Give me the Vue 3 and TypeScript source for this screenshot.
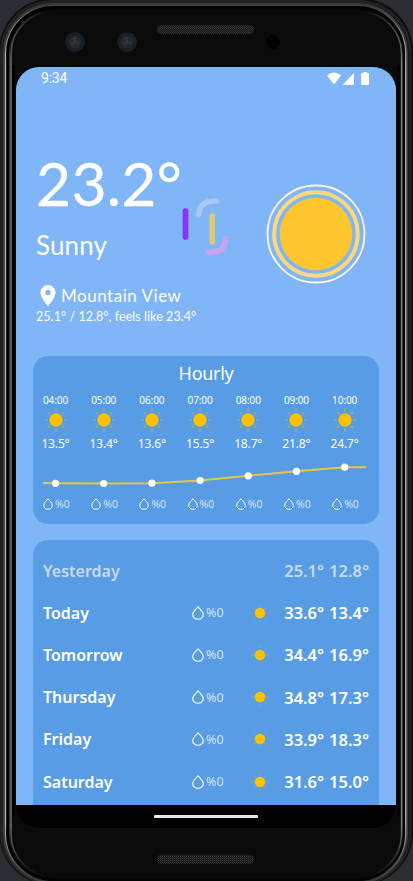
<script setup lang="ts">
interface Hour { time: string; temp: string; y: number }
interface Day { name: string; high: string; low: string; past?: boolean }

const hours: Hour[] = [
  { time: '04:00', temp: '13.5°', y: 20.3 },
  { time: '05:00', temp: '13.4°', y: 20.5 },
  { time: '06:00', temp: '13.6°', y: 20.2 },
  { time: '07:00', temp: '15.5°', y: 17.5 },
  { time: '08:00', temp: '18.7°', y: 12.8 },
  { time: '09:00', temp: '21.8°', y: 8.3 },
  { time: '10:00', temp: '24.7°', y: 4.2 },
]
const days: Day[] = [
  { name: 'Yesterday', high: '25.1°', low: '12.8°', past: true },
  { name: 'Today', high: '33.6°', low: '13.4°' },
  { name: 'Tomorrow', high: '34.4°', low: '16.9°' },
  { name: 'Thursday', high: '34.8°', low: '17.3°' },
  { name: 'Friday', high: '33.9°', low: '18.3°' },
  { name: 'Saturday', high: '31.6°', low: '15.0°' },
]
const pointX = (i: number): number => 12.5 + i * 48.2
const line = `0,20 ${hours.map((h, i) => `${pointX(i)},${h.y}`).join(' ')} 323,4.2`
const rays = [0, 45, 90, 135, 180, 225, 270, 315]
</script>

<template>
  <div class="device">
    <svg class="frame" width="413" height="881" viewBox="0 0 413 881">
      <defs>
        <linearGradient id="metal" x1="0" y1="0" x2="0" y2="1">
          <stop offset="0" stop-color="#444" />
          <stop offset="0.02" stop-color="#777" />
          <stop offset="0.07" stop-color="#bcbcbc" />
          <stop offset="0.93" stop-color="#bcbcbc" />
          <stop offset="1" stop-color="#333" />
        </linearGradient>
        <linearGradient id="inner" x1="0" y1="0" x2="0" y2="1">
          <stop offset="0" stop-color="#0a0a0a" />
          <stop offset="0.008" stop-color="#333" />
          <stop offset="0.06" stop-color="#77787a" />
          <stop offset="0.94" stop-color="#77787a" />
          <stop offset="1" stop-color="#0a0a0a" />
        </linearGradient>
        <pattern id="mesh" width="2" height="2" patternUnits="userSpaceOnUse">
          <rect width="2" height="2" fill="#151515" />
          <rect width="1" height="1" fill="#3a3a3a" />
          <rect x="1" y="1" width="1" height="1" fill="#2c2c2c" />
        </pattern>
      </defs>
      <rect width="413" height="881" fill="#2c2d33" />
      <rect x="-1" y="-2" width="414" height="888" rx="54" fill="#0c0c0c" />
      <rect x="1.5" y="1.5" width="408.500" height="882" rx="51" fill="none" stroke="#222" stroke-width="3" />
      <rect x="4" y="4" width="403" height="878.5" rx="49" fill="#000" stroke="#3b3b3b" stroke-width="2" />
      <rect x="5.500" y="5.300" width="400.200" height="876.500" rx="48" fill="#020202" stroke="url(#metal)" stroke-width="1.200" />
      <rect x="9.500" y="10" width="393" height="868" rx="44" fill="none" stroke="url(#inner)" stroke-width="1" opacity=".4" />
      <rect x="11" y="11" width="390.500" height="866" rx="43" fill="#0a0a0a" stroke="url(#inner)" stroke-width="1.400" />
      <path d="M13.500 65V816M398.500 65V816" stroke="#000" stroke-width="3" />
      <rect x="157" y="25" width="97" height="9" rx="4.500" fill="url(#mesh)" />
      <rect x="157" y="855" width="97" height="9" rx="4.500" fill="url(#mesh)" />
      <g v-for="x in [75, 127]" :key="x">
        <circle :cx="x" cy="42" r="10" fill="#182027" />
        <circle :cx="x" cy="42" r="6.500" fill="#25282c" />
        <circle :cx="x" cy="42" r="3.500" fill="none" stroke="#484a4d" stroke-dasharray="3 4" />
        <circle :cx="x" cy="42" r="2" fill="#34363a" />
      </g>
      <circle cx="273" cy="42" r="7" fill="#010101" />
    </svg>

    <main class="screen">
      <header class="status">
        <span>9:34</span>
        <svg width="44" height="14" viewBox="0 0 44 14" fill="#fff">
          <path d="M1 3.500Q8-2.300 15 3.500L8 12.500Z" />
          <path d="M28 1V13H16.500Z" />
          <path d="M36 1h1.500V0h3.500v1h1.500q.5 0 .5.500v10.500q0 1-1 1h-6q-1 0-1-1V2q0-1 1-1Z" />
        </svg>
      </header>

      <section class="now">
        <div class="summary">
          <div class="degrees">23.2°</div>
          <div class="condition">Sunny</div>
          <div class="place">
            <svg width="16" height="21" viewBox="0 0 16 21"><path d="M8 0A7.500 7.500 0 0 0 .500 7.500C.500 13 8 21 8 21S15.500 13 15.500 7.500A7.500 7.500 0 0 0 8 0Zm0 10.200a2.700 2.700 0 1 1 0-5.400 2.700 2.700 0 0 1 0 5.400Z" fill="#fff" /></svg>
            <span>Mountain View</span>
          </div>
          <div class="feels">25.1° / 12.8°, feels like 23.4°</div>
        </div>
        <svg class="loader" width="50" height="60" viewBox="0 0 50 60" fill="none" stroke-width="5.600" stroke-linecap="round">
          <path d="M4.500 14V40" stroke="#8a31ff" />
          <path d="M31.200 19V45" stroke="#e0c973" />
          <path d="M17.800 17C18 8 25 3.500 35.500 4" stroke="#a8c7f5" />
          <path d="M44.800 42C44 52 37 56 27 55" stroke="#c8a4ed" />
        </svg>
        <svg class="sun" width="100" height="100" viewBox="0 0 100 100">
          <circle cx="50" cy="50" r="48.500" fill="none" stroke="#fff5df" stroke-width="1.800" />
          <circle cx="50" cy="50" r="41.800" fill="none" stroke="#ffd977" stroke-width="4" />
          <circle cx="50" cy="50" r="36.300" fill="#ffc62f" />
        </svg>
      </section>

      <section class="card hourly">
        <h2>Hourly</h2>
        <div class="hours">
          <div v-for="h in hours" :key="h.time" class="hour">
            <span class="time">{{ h.time }}</span>
            <svg width="24" height="24" viewBox="-12 -12 24 24">
              <circle r="6.700" fill="#fcc200" />
              <path v-for="r in rays" :key="r" d="M0-8.300V-11.200" :transform="`rotate(${r})`" stroke="#d9bb2c" stroke-width="1" />
            </svg>
            <span class="temp">{{ h.temp }}</span>
          </div>
        </div>
        <svg class="chart" width="324" height="26" viewBox="0 0 324 26">
          <polyline :points="line" fill="none" stroke="#e1cb3f" stroke-width="2" />
          <circle v-for="(h, i) in hours" :key="i" :cx="pointX(i)" :cy="h.y" r="3.600" fill="#fff" />
        </svg>
        <div class="hours rain-row">
          <div v-for="h in hours" :key="h.time" class="rain">
            <svg width="10" height="12" viewBox="0 0 10 12"><path d="M5 .8C3.500 2.800.7 4.700.7 7.300a4.300 4.100 0 0 0 8.600 0C9.300 4.700 6.500 2.800 5 .8Z" fill="none" stroke="#fff" /></svg>
            <span>%0</span>
          </div>
        </div>
      </section>

      <section class="card daily">
        <div v-for="d in days" :key="d.name" class="day" :class="{ past: d.past }">
          <span class="name">{{ d.name }}</span>
          <template v-if="!d.past">
            <div class="rain big">
              <svg width="12" height="14" viewBox="0 0 12 14"><path d="M6 .8C4.200 3.300.7 5.500.7 8.400a5.300 4.900 0 0 0 10.600 0C11.300 5.500 7.800 3.300 6 .8Z" fill="none" stroke="#fff" stroke-width="1.100" /></svg>
              <span>%0</span>
            </div>
            <svg class="mini" width="18" height="18" viewBox="-9 -9 18 18">
              <circle r="5.300" fill="#fcc200" />
              <path v-for="r in rays" :key="r" d="M0-6.800V-8.700" :transform="`rotate(${r})`" stroke="#a5ad7c" stroke-width=".8" />
            </svg>
          </template>
          <span class="range"><span>{{ d.high }}</span><span>{{ d.low }}</span></span>
        </div>
      </section>

      <footer class="nav"><div class="pill"></div></footer>
    </main>
  </div>
</template>

<style>
body { margin: 0; background: #2c2d33; overflow: hidden; }
</style>

<style scoped>
.device { position: relative; box-sizing: border-box; width: 413px; height: 881px; padding: 67px 17px 0 16px; overflow: hidden; color: #fff; }
.frame { position: absolute; left: 0; top: 0; }
.screen { position: relative; display: flex; flex-direction: column; box-sizing: border-box; width: 380px; height: 761px; overflow: hidden; border-radius: 23px; background: linear-gradient(#80b6f8 738px, #000 738px); font-family: "Noto Sans", sans-serif; }
.status { display: flex; flex: none; justify-content: space-between; align-items: center; height: 23px; padding: 0 26px 0 25px; font: 14px/23px Roboto, sans-serif; }
.status span { letter-spacing: -.2px; }
.now { position: relative; flex: none; height: 266px; font-family: Lato, sans-serif; }
.summary { display: flex; flex-direction: column; padding: 57px 0 0 20px; }
.degrees { height: 72px; font-size: 60.500px; line-height: 72px; letter-spacing: .3px; -webkit-text-stroke: .3px #fff; white-space: nowrap; }
.condition { margin-top: 8px; font-size: 26px; line-height: 36px; letter-spacing: .1px; }
.place { display: flex; align-items: center; gap: 5px; height: 24px; margin: 20px 0 0 4px; font-size: 17px; letter-spacing: .52px; white-space: nowrap; }
.feels { margin-top: 1px; font-size: 12.500px; line-height: 18px; letter-spacing: .06px; white-space: nowrap; }
.loader { position: absolute; left: 165px; top: 107px; }
.sun { position: absolute; left: 249.500px; top: 93.500px; }
.card { flex: none; width: 346px; box-sizing: border-box; margin-left: 17px; background: #589ce5; }
.hourly { height: 168px; padding: 5px 0 0 10px; border-radius: 15px; }
h2 { margin: 0 10px 0 0; font-size: 18px; font-weight: 400; line-height: 25px; letter-spacing: -.3px; text-align: center; }
.hours { display: grid; grid-template-columns: repeat(7, 48.200px); }
.hour { display: flex; flex-direction: column; align-items: center; width: 25px; white-space: nowrap; }
.time { margin-top: 7px; font-size: 10px; line-height: 15px; letter-spacing: -.1px; }
.temp { font-size: 12px; line-height: 23px; letter-spacing: -.15px; }
.chart { display: block; margin-top: 8px; }
.rain-row { margin-top: 7px; }
.rain { display: flex; align-items: center; gap: 2px; height: 16px; font-size: 10.500px; }
.rain span { color: #d3e2f5; }
.daily { flex: 1; min-height: 0; margin-top: 15.500px; padding: 10px 10px 0; border-radius: 15px 15px 0 0; overflow: hidden; }
.day { display: grid; grid-template-columns: 149px 59px 18px 1fr; align-items: center; height: 42.200px; font-size: 16px; font-weight: 600; white-space: nowrap; }
.name { grid-column: 1; }
.range { display: flex; grid-column: 4; justify-content: flex-end; gap: 5px; font-size: 16.500px; }
.past { color: #c9dbee; }
.big { font-size: 12.500px; font-weight: 400; }
.nav { display: flex; flex: none; justify-content: center; height: 23px; }
.pill { width: 104px; height: 3px; margin-top: 10px; border-radius: 1px; background: #e8e8e8; }
</style>
